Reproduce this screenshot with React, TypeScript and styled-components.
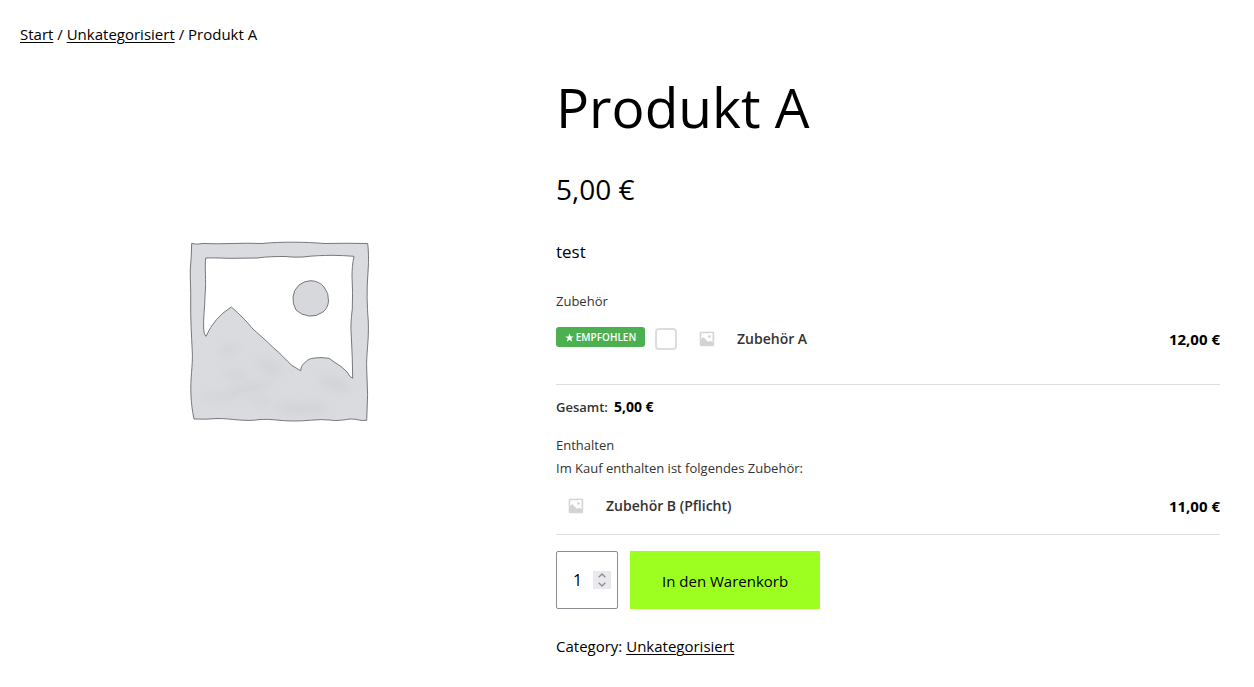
import React, { useState } from "react";
import styled, { createGlobalStyle } from "styled-components";

const GlobalStyle = createGlobalStyle`
  *, *::before, *::after { box-sizing: border-box; }
  body {
    margin: 0;
    background: #fff;
    color: #000;
    font-family: "Segoe UI", "Open Sans", "Noto Sans", sans-serif;
    font-size: 15px;
    line-height: 28px;
  }
`;

const Page = styled.div`
  padding: 20px 34px 24px 20px;
`;

const Link = styled.a`
  color: inherit;
  text-decoration: underline;
  text-decoration-thickness: 1px;
  text-underline-offset: 2px;
`;

const Breadcrumb = styled.nav`
  margin-bottom: 24px;
`;

const Product = styled.main`
  display: grid;
  grid-template-columns: 520fr 664fr;
  gap: 16px;
  align-items: start;
`;

const Gallery = styled.figure`
  margin: 0;
  svg { display: block; width: 100%; height: auto; }
`;

const Summary = styled.section`
  min-width: 0;
`;

const Title = styled.h1`
  margin: 0 0 28px;
  font-size: 55px;
  font-weight: 400;
  line-height: 70px;
`;

const Price = styled.p`
  margin: 0 0 30px;
  font-size: 28px;
  line-height: 38px;
`;

const Description = styled.p`
  margin: 0 0 24px;
  font-size: 17px;
`;

const Note = styled.p`
  margin: 0;
  font-size: 13px;
  line-height: 23px;
  color: #333;
`;

const Accessory = styled.div<{ $space: number }>`
  display: flex;
  align-items: center;
  gap: 10px;
  margin-top: 6px;
  padding-bottom: ${(p) => p.$space}px;
  border-bottom: 1px solid #ddd;
  font-size: 14px;
  font-weight: 600;
`;

const Badge = styled.span`
  display: flex;
  align-items: center;
  justify-content: center;
  gap: 2px;
  width: 89px;
  height: 20px;
  margin-bottom: 4px;
  border-radius: 3px;
  background: #4caf50;
  color: #fff;
  font-size: 10px;
  line-height: 20px;
`;

const Check = styled.input`
  appearance: none;
  width: 22px;
  height: 22px;
  margin: 0;
  border: 2px solid #ddd;
  border-radius: 4px;
  background: #fff;
  &:checked { background: #4caf50; border-color: #4caf50; }
`;

const Thumb = styled.span`
  flex: none;
  width: 40px;
  height: 40px;
  svg { display: block; width: 100%; height: 100%; }
`;

const Name = styled.label`
  flex: 1;
  color: #333;
`;

const Amount = styled.strong<{ $compact?: boolean }>`
  font-size: ${(p) => (p.$compact ? 14 : 15)}px;
  font-weight: 700;
  color: #000;
`;

const Total = styled.p`
  display: flex;
  align-items: baseline;
  gap: 6px;
  margin: 10px 0 15px;
  font-size: 13px;
  line-height: 23px;
  font-weight: 600;
  color: #333;
`;

const Cart = styled.form`
  display: flex;
  gap: 12px;
  margin: 16px 0 24px;
`;

const Quantity = styled.div`
  display: flex;
  align-items: center;
  justify-content: space-between;
  width: 62px;
  height: 58px;
  padding: 0 6px 0 16px;
  border: 1px solid #8c8c92;
  border-radius: 2px;
`;

const QuantityInput = styled.input`
  appearance: textfield;
  width: 16px;
  padding: 0;
  border: 0;
  outline: 0;
  background: none;
  color: #000;
  font: inherit;
  font-size: 16px;
  &::-webkit-inner-spin-button,
  &::-webkit-outer-spin-button { appearance: none; margin: 0; }
`;

const Spinner = styled.div`
  display: grid;
  width: 18px;
  background: #e9e9ed;
`;

const Step = styled.button`
  display: grid;
  place-items: center;
  height: 9px;
  padding: 0;
  border: 0;
  background: none;
`;

const AddButton = styled.button`
  height: 58px;
  padding: 2px 32px 0;
  border: 0;
  background: #9dff20;
  color: #000;
  font: inherit;
`;

const Meta = styled.p`
  margin: 0;
  line-height: 26px;
`;

const FRAME =
  "M191.700 243.300 Q196 245 203 243.500 C222 244.500 242 242.500 262 243.500 C282 241.500 305 242 325 243.500 Q348 243 367.700 243.500 C369 256 368.500 264 368 272 C366.500 290 367 305 368.300 322 C369 342 366 355 366.700 369 Q368.500 395 366.700 420.300 C361 421.500 356 418.500 350 419 C340 420.500 335 421 330 420 C318 418.500 305 421.500 292 421 C280 421 270 418.500 260 419.500 C245 422 232 418.500 218 418.500 Q206 419.500 194 419 C192 410 191.500 403 191 396 C190 378 193 366 192.300 352 C191.500 335 190.500 320 190.700 302 C191 290 190 280 190.300 269 Q191.500 256 191.700 243.300 Z";
const OPENING =
  "M205.700 258 C216 257.500 225 258.500 233 258.300 L257 258 C268 256.500 276 256.500 285 256.500 Q294 257.500 303 257 C314 255.500 324 255.500 332 255.300 Q344 255.500 354 256.300 C352.500 263 352 270 352 276 Q353 292 352.300 309 C351 319 350.500 327 351.300 336 Q352.500 358 352.700 378.300 Q350 377.500 347 372 L341.700 367 Q334 362 329 358.300 Q320 357 315 358 Q308 358.500 305.700 362 Q301 365 300.700 370.700 Q296 368 291.700 365.300 C286 360 280 353 273.300 347.700 C266 340 258 334 251.700 327.700 Q245 319 231.300 307 Q222 313 216.700 319.300 Q210 327 206 336.300 Q204 335 203.700 329.300 C203 318 205 307 205 296 C206.500 280 204.500 268 205.700 258 Z";

function Placeholder({ small = false }: { small?: boolean }) {
  const stroke = small ? "none" : "#77787c";
  return (
    <svg viewBox="20 72 520 520" role="img" aria-label="Platzhalter">
      <defs>
        <filter id="wash" x="-20%" y="-20%" width="140%" height="140%">
          <feGaussianBlur stdDeviation="4" />
        </filter>
      </defs>
      <path
        d={FRAME}
        fill={small ? "#d2d3d7" : "#dadbdf"}
        stroke={small ? "#d2d3d7" : stroke}
        strokeWidth={small ? 12 : 1}
      />
      {!small && (
        <g fill="#cbccd1" filter="url(#wash)" opacity="0.5">
          <ellipse cx="229" cy="350" rx="10" ry="5" transform="rotate(-35 229 350)" />
          <ellipse cx="270" cy="367" rx="14" ry="6" transform="rotate(25 270 367)" />
          <ellipse cx="236" cy="375" rx="12" ry="4" />
          <ellipse cx="250" cy="388" rx="24" ry="5" transform="rotate(-12 250 388)" />
          <ellipse cx="335" cy="384" rx="16" ry="7" transform="rotate(20 335 384)" />
          <ellipse cx="218" cy="397" rx="18" ry="4" />
          <ellipse cx="302" cy="408" rx="28" ry="6" />
          <ellipse cx="260" cy="401" rx="14" ry="3" />
        </g>
      )}
      <path d={OPENING} fill="#fff" stroke={stroke} />
      <path
        d="M311 280.700 Q319 281 324 287 Q329 293 328.500 301 Q328 308 323 312 Q316 317 309 316 Q301 315 296 310 Q292.500 304 293 297 Q293.500 290 299 285 Q305 280.500 311 280.700 Z"
        fill={small ? "#d2d3d7" : "#d7d8dc"}
        stroke={stroke}
      />
    </svg>
  );
}

function Star() {
  return (
    <svg width="9" height="9" viewBox="0 0 24 24" aria-hidden="true">
      <path fill="#fff" d="M12 1l3 8h8.500l-6.800 5.200L19.300 23 12 17.700 4.700 23l2.600-8.800L.5 9H9z" />
    </svg>
  );
}

function Chevron({ up = false }: { up?: boolean }) {
  return (
    <svg width="8" height="5" viewBox="0 0 8 5" aria-hidden="true">
      <path d={up ? "M0.700 4.200L4 1l3.300 3.200" : "M0.700 .8L4 4 7.300 .8"} fill="none" stroke="#8f8f96" strokeWidth="1.400" />
    </svg>
  );
}

export default function App() {
  const [quantity, setQuantity] = useState(1);
  return (
    <Page>
      <GlobalStyle />
      <Breadcrumb aria-label="Breadcrumb">
        <Link href="#start">Start</Link> / <Link href="#unkategorisiert">Unkategorisiert</Link> / Produkt A
      </Breadcrumb>
      <Product>
        <Gallery>
          <Placeholder />
        </Gallery>
        <Summary>
          <Title>Produkt A</Title>
          <Price>5,00 €</Price>
          <Description>test</Description>
          <Note>Zubehör</Note>
          <Accessory $space={25}>
            <Badge>
              <Star />
              EMPFOHLEN
            </Badge>
            <Check type="checkbox" id="accessory-a" />
            <Thumb>
              <Placeholder small />
            </Thumb>
            <Name htmlFor="accessory-a">Zubehör A</Name>
            <Amount>12,00 €</Amount>
          </Accessory>
          <Total>
            Gesamt: <Amount $compact>5,00 €</Amount>
          </Total>
          <Note>Enthalten</Note>
          <Note>Im Kauf enthalten ist folgendes Zubehör:</Note>
          <Accessory $space={8}>
            <Thumb>
              <Placeholder small />
            </Thumb>
            <Name as="span">Zubehör B (Pflicht)</Name>
            <Amount>11,00 €</Amount>
          </Accessory>
          <Cart onSubmit={(e) => e.preventDefault()}>
            <Quantity>
              <QuantityInput
                type="number"
                min={1}
                aria-label="Menge"
                value={quantity}
                onChange={(e) => setQuantity(Math.max(1, Number(e.target.value)))}
              />
              <Spinner>
                <Step type="button" aria-label="Mehr" onClick={() => setQuantity(quantity + 1)}>
                  <Chevron up />
                </Step>
                <Step type="button" aria-label="Weniger" onClick={() => setQuantity(Math.max(1, quantity - 1))}>
                  <Chevron />
                </Step>
              </Spinner>
            </Quantity>
            <AddButton type="submit">In den Warenkorb</AddButton>
          </Cart>
          <Meta>
            Category: <Link href="#unkategorisiert">Unkategorisiert</Link>
          </Meta>
        </Summary>
      </Product>
    </Page>
  );
}
